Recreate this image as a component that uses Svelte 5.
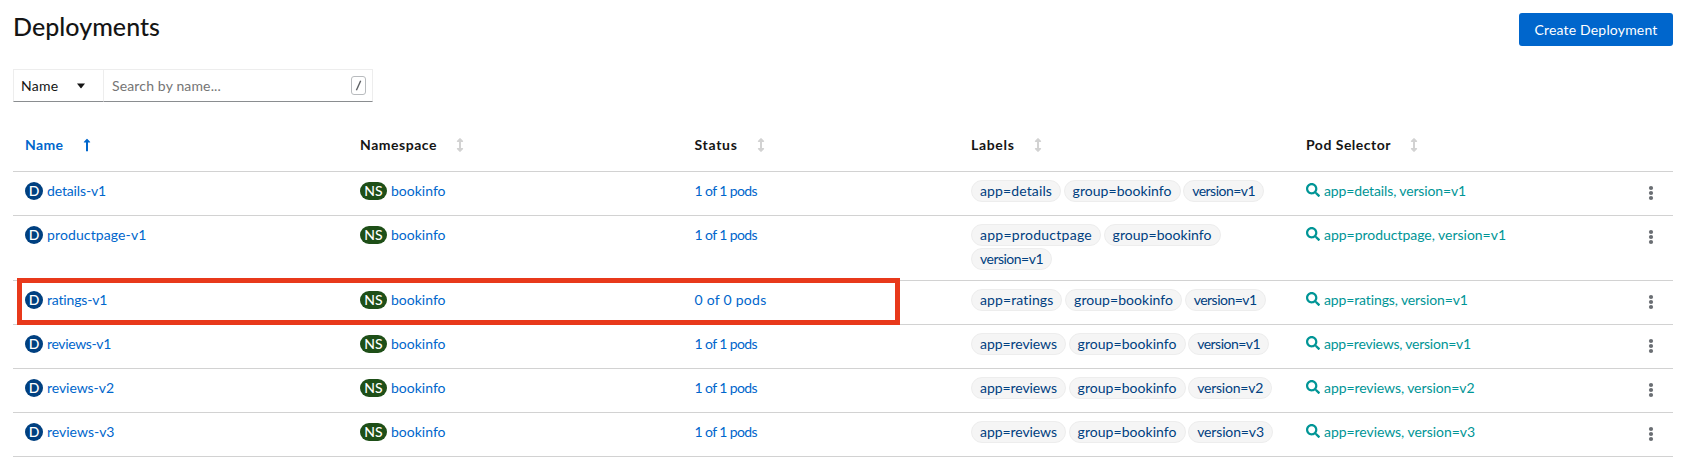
<script>
  // Tracks a text run out to a given width through its letter spacing.
  function fit(node, width) {
    const apply = () => {
      node.style.letterSpacing = '0px';
      const natural = node.getBoundingClientRect().width;
      const count = node.textContent.length;
      node.style.letterSpacing = `${(width - natural) / count}px`;
    };
    apply();
    document.fonts.ready.then(apply);
  }

  const columns = [
    { title: 'Name', width: 38.5, sorted: true },
    { title: 'Namespace', width: 77 },
    { title: 'Status', width: 43 },
    { title: 'Labels', width: 43.5 },
    { title: 'Pod Selector', width: 85 },
  ];

  const group = ['group=bookinfo', 99];
  const v1 = ['version=v1', 63];
  const one = ['1 of 1 pods', 62.5];

  const rows = [
    { name: ['details-v1', 59], status: one, labels: [['app=details', 72], group, v1], selector: ['app=details, version=v1', 142] },
    { name: ['productpage-v1', 99.5], status: one, labels: [['app=productpage', 112], group, v1], selector: ['app=productpage, version=v1', 182] },
    { name: ['ratings-v1', 60.5], status: ['0 of 0 pods', 72], labels: [['app=ratings', 73.7], group, v1], selector: ['app=ratings, version=v1', 144], marked: true },
    { name: ['reviews-v1', 64], status: one, labels: [['app=reviews', 77], group, v1], selector: ['app=reviews, version=v1', 147] },
    { name: ['reviews-v2', 67], status: one, labels: [['app=reviews', 77], group, ['version=v2', 66]], selector: ['app=reviews, version=v2', 150.5] },
    { name: ['reviews-v3', 67.5], status: one, labels: [['app=reviews', 77], group, ['version=v3', 66.7]], selector: ['app=reviews, version=v3', 151] },
  ];
</script>

{#snippet run(item)}<span class="run" use:fit={item[1]}>{item[0]}</span>{/snippet}

<main>
  <header>
    <h1>{@render run(['Deployments', 147])}</h1>
    <button class="create">{@render run(['Create Deployment', 123])}</button>
  </header>

  <div class="toolbar">
    <button class="filter">
      {@render run(['Name', 37.5])}
      <svg width="10" height="6" viewBox="0 0 10 6"><path d="M1 .5h8L5.500 5a.7.7 0 0 1-1 0z" fill="#151515" /></svg>
    </button>
    <div class="search">
      {@render run(['Search by name...', 109])}
      <kbd><svg width="13" height="17" viewBox="0 0 13 17"><path d="M4.400 13.200 8.700 3.800" stroke="#5c5f63" stroke-width="1.4" /></svg></kbd>
    </div>
  </div>

  <section class="table">
    <div class="row head">
      {#each columns as col}
        <div class="cell" class:sorted={col.sorted}>
          {@render run([col.title, col.width])}
          {#if col.sorted}
            <svg class="up" width="8" height="14" viewBox="0 0 8 14"><path d="M3 13.200V4.600H1.400a.5.5 0 0 1-.4-.9L3.600.9a.6.6 0 0 1 .8 0L7 3.700a.5.5 0 0 1-.4.9H5v8.600z" fill="#06c" /></svg>
          {:else}
            <svg width="8" height="14" viewBox="0 0 8 14"><path d="M3.600.2a.6.6 0 0 1 .8 0L6.900 2.800a.6.6 0 0 1-.4 1.100H5v6.200h1.500a.6.6 0 0 1 .4 1.100L4.400 13.800a.6.6 0 0 1-.8 0L1.100 11.200a.6.6 0 0 1 .4-1.100H3V3.900H1.500a.6.6 0 0 1-.4-1.100z" fill="#d2d2d2" /></svg>
          {/if}
        </div>
      {/each}
      <div></div>
    </div>

    {#each rows as row}
      <div class="row" class:marked={row.marked}>
        <div class="cell link"><span class="badge deploy">D</span>{@render run(row.name)}</div>
        <div class="cell link"><span class="badge ns">NS</span>{@render run(['bookinfo', 54.5])}</div>
        <div class="cell link">{@render run(row.status)}</div>
        <div class="cell labels">
          {#each row.labels as label}<span class="chip">{@render run(label)}</span>{/each}
        </div>
        <div class="cell selector">
          <svg width="14" height="14" viewBox="0 0 512 512"><path fill="#009596" d="M505 442.700 405.300 343c-4.500-4.500-10.600-7-17-7H372c27.600-35.300 44-79.700 44-128C416 93.100 322.900 0 208 0S0 93.100 0 208s93.100 208 208 208c48.300 0 92.700-16.400 128-44v16.300c0 6.400 2.500 12.500 7 17l99.700 99.700c9.400 9.400 24.600 9.400 33.900 0l28.300-28.300c9.400-9.400 9.400-24.600.1-34zM208 336c-70.700 0-128-57.200-128-128 0-70.700 57.200-128 128-128 70.700 0 128 57.200 128 128 0 70.700-57.200 128-128 128z" /></svg>
          {@render run(row.selector)}
        </div>
        <div class="actions">
          <svg width="6" height="16" viewBox="0 0 6 16" fill="#6a6e73"><circle cx="3" cy="3" r="2.100" /><circle cx="3" cy="8" r="2.100" /><circle cx="3" cy="13" r="2.100" /></svg>
        </div>
      </div>
    {/each}
  </section>
</main>

<style>
  :global(body) { background: #fff; }
  main {
    box-sizing: border-box;
    height: 470px;
    padding: 13px 15px 0 13px;
    overflow: hidden;
    font: 14px/20px Lato, sans-serif;
    color: #151515;
  }
  .run { display: inline-block; white-space: nowrap; }
  button { font: inherit; color: inherit; }
  header { display: flex; justify-content: space-between; align-items: flex-start; height: 56px; }
  h1 { margin: -2px 0 0; font-size: 25px; line-height: 30px; font-weight: 500; }
  .create {
    box-sizing: border-box;
    width: 154px;
    height: 33px;
    padding: 0;
    border: 0;
    border-radius: 3px;
    background: #06c;
    color: #fff;
  }
  .toolbar { display: flex; width: 360px; height: 33px; }
  .filter, .search {
    box-sizing: border-box;
    display: flex;
    align-items: center;
    justify-content: space-between;
    background: #fff;
    border: 1px solid #ededed;
    border-bottom-color: #8a8d90;
  }
  .filter { width: 90px; padding: 0 17px 0 7px; border-right: 0; }
  .search { flex: 1; padding: 0 6px 0 8px; color: #757575; }
  kbd {
    box-sizing: border-box;
    display: flex;
    width: 15px;
    height: 19px;
    border: 1px solid #b8bbbe;
    border-radius: 3px;
  }
  .row {
    position: relative;
    display: grid;
    grid-template-columns: 335px 334.5px 276.5px 335px 1fr 45px;
    border-bottom: 1px solid #d2d2d2;
    min-height: 43px;
  }
  .head { height: 69px; font-weight: 700; }
  .head .cell { box-sizing: border-box; align-items: center; gap: 19px; height: 51px; padding-top: 35px; }
  .head .sorted { color: #06c; }
  .cell { display: flex; align-items: flex-start; padding: 9px 0 0 12px; }
  .link { color: #06c; }
  .badge {
    height: 18px;
    border-radius: 9px;
    line-height: 18px;
    font-size: 14px;
    font-weight: 500;
    color: #fff;
    text-align: center;
    margin: 1px 4px 0 0;
  }
  .deploy { width: 18px; background: #004080; }
  .ns { width: 27px; background: #1e4f18; }
  .labels { flex-wrap: wrap; gap: 2px 2.6px; padding-top: 8px; padding-bottom: 10px; }
  .chip {
    box-sizing: border-box;
    height: 22px;
    padding: 0 8px;
    border: 1px solid #ededed;
    border-radius: 11px;
    background: #f5f5f5;
    color: #004080;
  }
  .selector { gap: 4px; color: #009596; }
  .selector svg { margin-top: 2px; }
  .actions { display: flex; justify-content: center; align-items: flex-start; padding-top: 13px; }
  .marked::after {
    content: '';
    position: absolute;
    left: 4px;
    top: -3px;
    width: 873px;
    height: 37px;
    border: 5px solid #e8391b;
  }
</style>
